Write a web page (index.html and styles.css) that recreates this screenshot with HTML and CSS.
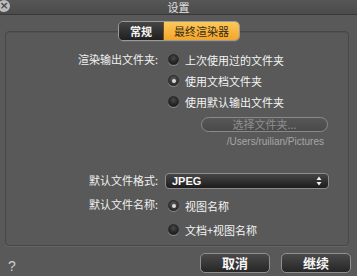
FILE: index.html
```html
<!DOCTYPE html>
<html lang="zh-CN">
<head>
    <meta charset="UTF-8">
    <title>设置</title>
    <link rel="stylesheet" href="styles.css">
</head>
<body>
    <div class="window">
        <div class="titlebar">
            <span class="close">×</span>
            <span class="title">设置</span>
        </div>

        <div class="tabs">
            <span class="tab">常规</span>
            <span class="tab active">最终渲染器</span>
        </div>

        <div class="panel">
            <div class="form">
                <div class="label">渲染输出文件夹:</div>
                <label class="option"><span class="radio"></span>上次使用过的文件夹</label>

                <label class="option col2"><span class="radio checked"></span>使用文档文件夹</label>

                <label class="option col2"><span class="radio"></span>使用默认输出文件夹</label>

                <div class="folder col2">
                    <button class="choose" disabled>选择文件夹...</button>
                    <div class="path">/Users/ruilian/Pictures</div>
                </div>

                <div class="label format-label">默认文件格式:</div>
                <div class="select">
                    <span>JPEG</span>
                    <span class="arrows">
                        <svg viewBox="0 0 6 10" width="6" height="10">
                            <path d="M3 0.5L5.5 4H0.5z M3 9.5L0.5 6h5z"/>
                        </svg>
                    </span>
                </div>

                <div class="label name-label">默认文件名称:</div>
                <label class="option name-opt"><span class="radio checked"></span>视图名称</label>

                <label class="option col2 name-opt2"><span class="radio"></span>文档+视图名称</label>
            </div>
        </div>

        <div class="footer">
            <span class="help">?</span>
            <div class="actions">
                <button class="btn">取消</button>
                <button class="btn">继续</button>
            </div>
        </div>
    </div>
</body>
</html>
```

FILE: styles.css
```css
* {
    margin: 0;
    padding: 0;
    box-sizing: border-box;
}

body {
    font-family: "Noto Sans CJK SC", "Liberation Sans", sans-serif;
    font-size: 11px;
    background: #595959;
    color: #ececec;
    width: 357px;
    height: 276px;
    overflow: hidden;
}

.window {
    height: 276px;
    display: flex;
    flex-direction: column;
}

/* title bar */
.titlebar {
    position: relative;
    height: 15px;
    background: linear-gradient(#565656, #4b4b4b);
    border-bottom: 1px solid #383838;
    display: flex;
    align-items: center;
    justify-content: center;
}

.title {
    color: #e2e2e2;
    font-size: 11px;
    line-height: 14px;
}

.close {
    position: absolute;
    left: -2px;
    top: 0;
    width: 12px;
    height: 12px;
    border-radius: 50%;
    background: #bdbdbd;
    color: #4a4a4a;
    font-family: "DejaVu Sans", sans-serif;
    font-weight: bold;
    font-size: 11px;
    line-height: 12px;
    text-align: center;
}

/* segmented control */
.tabs {
    position: relative;
    z-index: 1;
    align-self: center;
    display: flex;
    margin-top: 6px;
    margin-bottom: -10px;
    margin-left: 1px;
    height: 20px;
    border: 1px solid #9a9a9a;
    border-radius: 5px;
    overflow: hidden;
    box-shadow: 0 1px 0 rgba(255, 255, 255, 0.08);
}

.tab {
    display: flex;
    align-items: center;
    justify-content: center;
    font-weight: bold;
    font-size: 11px;
    padding: 0 8px;
    background: linear-gradient(#454545, #1f1f1f);
    color: #f4f4f4;
}

.tab:first-child {
    width: 44px;
}

.tab.active {
    width: 76px;
    background: linear-gradient(#fbc95a, #f3a52b);
    color: #3a2a10;
    font-weight: normal;
    border-left: 1px solid #6b5320;
}

/* panel */
.panel {
    margin: 0 8px 0 5px;
    height: 215px;
    border: 1px solid #474747;
    border-radius: 4px;
    box-shadow: inset 0 1px 0 rgba(0, 0, 0, 0.08), 0 1px 0 rgba(255, 255, 255, 0.08);
    padding-top: 17px;
}

.form {
    display: grid;
    grid-template-columns: 152px 164px;
    column-gap: 7px;
    align-items: center;
}

.col2 {
    grid-column: 2;
}

.label {
    text-align: right;
    color: #f0f0f0;
    height: 21px;
    line-height: 21px;
}

.option {
    display: flex;
    align-items: center;
    height: 21px;
    padding-left: 3px;
    gap: 6px;
    color: #f4f4f4;
    white-space: nowrap;
}

.radio {
    width: 11px;
    height: 11px;
    border-radius: 50%;
    background: radial-gradient(circle at 50% 35%, #4a4a4a, #1d1d1d 75%);
    border: 1px solid #2a2a2a;
    box-shadow: 0 1px 0 rgba(255, 255, 255, 0.25);
    display: flex;
    align-items: center;
    justify-content: center;
    flex: none;
}

.radio.checked {
    background: radial-gradient(circle at 50% 35%, #5a5a5a, #2c2c2c 80%);
}

.radio.checked::after {
    content: "";
    width: 4px;
    height: 4px;
    border-radius: 50%;
    background: #dcdcdc;
}

.folder {
    padding-top: 5px;
}

.choose {
    display: block;
    margin-left: 36px;
    width: 127px;
    height: 15px;
    border: 1px solid #8a8a8a;
    border-radius: 8px;
    background: linear-gradient(#575757, #4a4a4a);
    color: #8f8f8f;
    font-family: inherit;
    font-size: 11px;
    line-height: 13px;
}

.path {
    width: 159px;
    text-align: right;
    font-family: "Liberation Sans", sans-serif;
    font-size: 10px;
    color: #a6a6a6;
    height: 14px;
    line-height: 14px;
    margin-top: 3px;
}

.format-label {
    margin-top: 21px;
}

.select {
    margin-top: 21px;
    height: 16px;
    border: 1px solid #8c8c8c;
    border-radius: 4px;
    background: linear-gradient(#464646, #1c1c1c);
    display: flex;
    align-items: center;
    justify-content: space-between;
    padding: 0 6px 0 6px;
    font-weight: bold;
    font-family: "Liberation Sans", sans-serif;
    font-size: 11px;
    color: #f8f8f8;
}

.arrows svg {
    display: block;
    fill: #f0f0f0;
}

.name-label {
    margin-top: 2px;
}

.name-opt {
    margin-top: 4px;
}

.name-opt2 {
    margin-top: 3px;
}

/* footer */
.footer {
    flex: 1;
    display: flex;
    align-items: center;
    justify-content: space-between;
    padding: 3px 6px 0 8px;
}

.help {
    font-family: "Liberation Sans", sans-serif;
    font-size: 14px;
    color: #cfcfcf;
    margin-top: 6px;
}

.actions {
    display: flex;
    gap: 11px;
}

.btn {
    width: 70px;
    height: 20px;
    border: 1px solid #909090;
    border-radius: 5px;
    background: linear-gradient(#4a4a4a, #262626);
    color: #f6f6f6;
    font-family: inherit;
    font-size: 13px;
    font-weight: bold;
    line-height: 18px;
}
```
